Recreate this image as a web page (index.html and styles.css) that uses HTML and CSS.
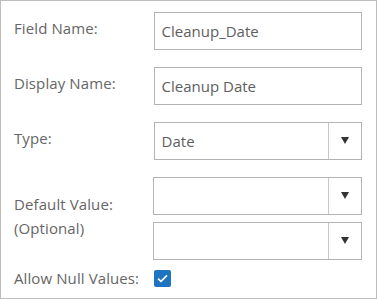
FILE: index.html
```html
<!DOCTYPE html>
<html lang="en">
<head>
    <meta charset="UTF-8">
    <meta name="viewport" content="width=device-width, initial-scale=1.0">
    <title>Add Field</title>
    <link rel="stylesheet" href="styles.css">
</head>
<body>
    <!-- Field properties panel -->
    <div class="panel">
        <div class="row">
            <label class="label">Field Name:</label>
            <div class="input">Cleanup_Date</div>
        </div>

        <div class="row">
            <label class="label">Display Name:</label>
            <div class="input">Cleanup Date</div>
        </div>

        <div class="row">
            <label class="label">Type:</label>
            <div class="select">
                <span class="value">Date</span>
                <span class="arrow"></span>
            </div>
        </div>

        <div class="row">
            <label class="label">Default Value:<br>(Optional)</label>
            <div class="stack">
                <div class="select">
                    <span class="value"></span>
                    <span class="arrow"></span>
                </div>
                <div class="select">
                    <span class="value"></span>
                    <span class="arrow"></span>
                </div>
            </div>
        </div>

        <div class="row row-check">
            <label class="label">Allow Null Values:</label>
            <span class="checkbox">
                <svg width="11" height="9" viewBox="0 0 11 9">
                    <path d="M1 4.6 L4 7.4 L10 1.4" fill="none" stroke="#fff" stroke-width="1.6"/>
                </svg>
            </span>
        </div>
    </div>
</body>
</html>
```

FILE: styles.css
```css
/* General Styling */
body {
    margin: 0;
    padding: 0;
    font-family: "Open Sans", Lato, sans-serif;
    background-color: #fff;
    color: #666;
}

/* Panel */
.panel {
    box-sizing: border-box;
    width: 377px;
    height: 299px;
    border: 1px solid #bdbdbd;
    padding: 11px 14px 0 13px;
}

.row {
    display: flex;
    align-items: center;
    margin-bottom: 17px;
}

.label {
    width: 140px;
    font-size: 15px;
    letter-spacing: 0.1px;
    line-height: 24px;
    margin-bottom: 6px;
}

/* Inputs */
.input,
.select {
    box-sizing: border-box;
    width: 209px;
    height: 38px;
    border: 1px solid #b3b3b3;
    font-size: 15px;
    color: #5e5e5e;
}

.input {
    padding: 0 7px;
    line-height: 36px;
}

.select {
    display: flex;
}

.select .value {
    flex: 1;
    padding: 0 7px;
    line-height: 36px;
}

.select .arrow {
    width: 32px;
    border-left: 1px solid #c8c8c8;
    position: relative;
}

.select .arrow::after {
    content: "";
    position: absolute;
    left: 12px;
    top: 14px;
    border-left: 4px solid transparent;
    border-right: 4px solid transparent;
    border-top: 7px solid #333;
}

.stack {
    display: flex;
    flex-direction: column;
    gap: 7px;
}

/* Checkbox row */
.row-check {
    margin-bottom: 0;
    margin-top: -11px;
}

.row-check .label {
    margin-bottom: 0;
}

.checkbox {
    width: 17px;
    height: 17px;
    border-radius: 2px;
    background-color: #1f74bf;
    display: flex;
    align-items: center;
    justify-content: center;
}
```
